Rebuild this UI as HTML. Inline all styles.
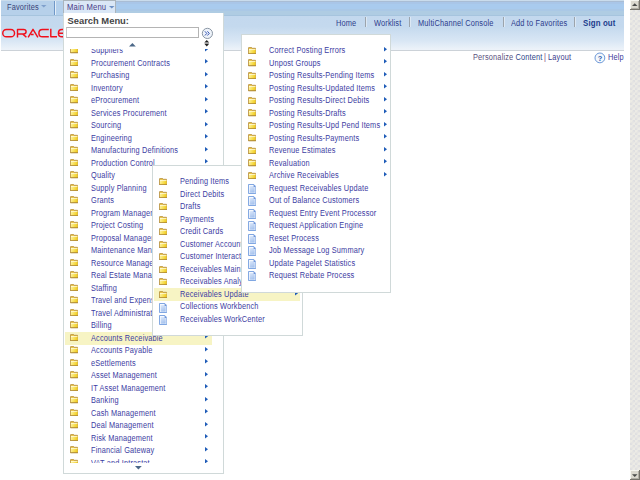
<!DOCTYPE html><html><head><meta charset="utf-8"><style>
*{margin:0;padding:0;box-sizing:border-box}
html,body{width:640px;height:480px;overflow:hidden;background:#fff;font-family:"Liberation Sans",sans-serif}
.abs{position:absolute}
.it{position:absolute;font-size:8.4px;line-height:12.5px;height:12.5px;color:#3c3ca2;white-space:nowrap;letter-spacing:0.18px;transform:scaleX(0.88);transform-origin:0 0}
.ico{position:absolute;line-height:0}
.ico svg{display:block}
.hl{position:absolute;background:#f7f4c4}
.panel{position:absolute;background:#fff;border:1px solid #d0d9d9;overflow:hidden}
.clip{position:absolute;overflow:hidden}
.nav{position:absolute;font-size:8.5px;line-height:10px;color:#2c3c8c;white-space:nowrap;top:17.5px;letter-spacing:0.18px;transform:scaleX(0.87);transform-origin:0 0}
.sep{position:absolute;top:16.5px;width:2px;height:10.5px;background:#9ca4ac;border-right:1px solid #dce8f4}
</style></head><body>
<svg width="0" height="0" style="position:absolute"><defs><linearGradient id="fg" x1="0" x2="1" y1="0" y2="0.3"><stop offset="0" stop-color="#fff6a8"/><stop offset="1" stop-color="#f2d028"/></linearGradient><linearGradient id="dg" x1="0" x2="0.4" y1="0" y2="1"><stop offset="0" stop-color="#dce8fa"/><stop offset="1" stop-color="#a8c4ee"/></linearGradient></defs></svg>
<div class="abs" style="left:1px;top:0;width:623px;height:16px;background:linear-gradient(#cadcec 0,#cadcec 1px,#a9bdd5 1px,#a9bdd5 2px,#a9c6e8 2px,#a9c6e8 4px,#a9cbee 4px,#a9cbee 9px,#aac8e6 9px,#aac8e6 11px,#afcce3 11px,#afcce3 15px,#a6c4de 15px)"></div>
<div class="abs" style="left:1px;top:1px;width:54px;height:14px;background:#b6d0ea;border-right:1px solid #7098c8"></div><div class="abs" style="left:56px;top:1px;width:7px;height:14px;background:#b4d0ec"></div>
<div class="abs" style="left:55px;top:1px;width:1px;height:14px;background:#e4eef8"></div>
<div class="nav" style="left:6.5px;top:1.5px;font-size:8.5px;color:#3a4478">Favorites</div>
<svg class="abs" style="left:41px;top:4.8px" width="6" height="3"><path d="M0 0 H5.5 L2.75 2.6 Z" fill="#7fa0cc"/></svg>
<div class="abs" style="left:1px;top:16px;width:623px;height:35px;background:linear-gradient(#c3d8ee 0,#c4d9ee 30%,#d8e6f4 70%,#ecf2f9 95%,#ecf2f9 100%)"></div>
<div class="abs" style="left:1px;top:50px;width:623px;height:1px;background:#ccd2d8"></div>
<svg class="abs" style="left:0;top:26px" width="63" height="14" viewBox="0 0 63 14">
<g fill="none" stroke="#f0101c" stroke-width="1.45" stroke-linejoin="round">
<rect x="2.75" y="3.5" width="11.8" height="7.3" rx="3.65" ry="3.65"/>
<path d="M17.5 11.5 V3.5 H23.5 Q26.1 3.5 26.1 5.7 Q26.1 7.9 23.5 7.9 H17.5 M22.6 7.9 L26.4 11.3"/>
<path d="M28.1 11.3 L33 3.3 L37.9 11.3 M30.9 8.4 H33.6"/>
<path d="M48.8 3.5 H42.5 Q38.9 3.5 38.9 7.15 Q38.9 10.8 42.5 10.8 H48.8"/>
<path d="M50.8 2.8 V10.8 H57"/>
<path d="M64 3.5 H62 Q58.4 3.5 58.4 7.15 Q58.4 10.8 62 10.8 H64 M59 7.15 H64"/>
</g></svg>
<div class="nav" style="left:335.8px">Home</div>
<div class="sep" style="left:365px"></div>
<div class="nav" style="left:374px">Worklist</div>
<div class="sep" style="left:409px"></div>
<div class="nav" style="left:418px">MultiChannel Console</div>
<div class="sep" style="left:502.5px"></div>
<div class="nav" style="left:511px">Add to Favorites</div>
<div class="sep" style="left:573.5px"></div>
<div class="nav" style="left:582.5px;font-weight:bold;font-size:9px;color:#1c3c8c">Sign out</div>
<div class="nav" style="left:472.5px;top:52px;color:#5a507c">Personalize <span style="color:#2c4488">Content</span></div>
<div class="nav" style="left:543.6px;top:52px;color:#7a3a7a">|</div>
<div class="nav" style="left:547.6px;top:52px;color:#3a3a8a">Layout</div>
<svg class="abs" style="left:594px;top:51.5px" width="12" height="12"><circle cx="5.9" cy="5.9" r="4.9" fill="#f4f8fc" stroke="#6c98d8" stroke-width="1"/><text x="5.9" y="8.7" font-size="7.4" font-weight="bold" font-family="Liberation Sans" fill="#2c5aac" text-anchor="middle">?</text></svg>
<div class="nav" style="left:607.5px;top:52px;color:#3a3a98">Help</div>
<div class="abs" style="left:63px;top:0;width:53px;height:14px;background:#dae7f6;border:1px solid #aab4bc;border-bottom:none"></div>
<div class="nav" style="left:67px;top:1.8px;font-size:8.8px;color:#483c88">Main Menu</div>
<svg class="abs" style="left:109px;top:6px" width="6" height="3"><path d="M0 0 H5.5 L2.75 2.6 Z" fill="#6c90c4"/></svg>
<div class="panel" style="left:63px;top:12.5px;width:161px;height:461px;border-top:none"></div>
<div class="abs" style="left:67.5px;top:15px;font-size:9.4px;line-height:11px;font-weight:bold;color:#454545">Search Menu:</div>
<div class="abs" style="left:65.5px;top:27px;width:133.5px;height:11px;border:1px solid #b4b4b4;border-left-color:#c8c8c8;background:#fff"></div>
<svg class="abs" style="left:201px;top:27px" width="13" height="13"><circle cx="6.4" cy="6.4" r="5.1" fill="#eef3fa" stroke="#8a96a4" stroke-width="1"/><path d="M3.9 4.3 L5.8 6.4 L3.9 8.5 M6.4 4.3 L8.3 6.4 L6.4 8.5" fill="none" stroke="#3050b0" stroke-width="0.95"/></svg>
<svg class="abs" style="left:204px;top:40px" width="6" height="7"><path d="M0.3 2.6 L2.75 0 L5.2 2.6 Z M0.3 3.8 L2.75 6.4 L5.2 3.8 Z" fill="#222"/><rect x="0.8" y="2.6" width="3.9" height="1.2" fill="#999"/></svg>
<svg class="abs" style="left:129px;top:42.5px" width="7" height="4"><path d="M0 3.4 L3.4 0 L6.8 3.4 Z" fill="#4c6888"/></svg>
<div class="clip" style="left:64px;top:49px;width:159px;height:414px">
<div class="abs" style="left:-64px;top:-49px;width:640px;height:480px">
<div class="ico" style="left:69.9px;top:46.2px"><svg class="ic" width="8.6" height="7.4" viewBox="0 0 9 8"><path d="M0.4 1.1 Q0.4 0.4 1.1 0.4 H3.6 L4.4 1.4 H7.7 Q8.4 1.4 8.4 2.1 V7.4 H0.4 Z" fill="#e8c450" stroke="#b08838" stroke-width="0.8"/><rect x="0.9" y="2.2" width="7" height="4.8" fill="url(#fg)"/><rect x="0.9" y="2.2" width="7" height="0.7" fill="#fffff2"/><rect x="0.4" y="7" width="8" height="0.6" fill="#9c7428"/></svg></div>
<div class="it" style="left:90.7px;top:43.8px">Suppliers</div>
<div class="ico" style="left:205px;top:46.8px"><svg class="ar" width="4" height="5" viewBox="0 0 4 5"><path d="M0 0 L3 2.25 L0 4.5 Z" fill="#1f5cb8"/></svg></div>
<div class="ico" style="left:69.9px;top:58.7px"><svg class="ic" width="8.6" height="7.4" viewBox="0 0 9 8"><path d="M0.4 1.1 Q0.4 0.4 1.1 0.4 H3.6 L4.4 1.4 H7.7 Q8.4 1.4 8.4 2.1 V7.4 H0.4 Z" fill="#e8c450" stroke="#b08838" stroke-width="0.8"/><rect x="0.9" y="2.2" width="7" height="4.8" fill="url(#fg)"/><rect x="0.9" y="2.2" width="7" height="0.7" fill="#fffff2"/><rect x="0.4" y="7" width="8" height="0.6" fill="#9c7428"/></svg></div>
<div class="it" style="left:90.7px;top:57.0px">Procurement Contracts</div>
<div class="ico" style="left:205px;top:59.3px"><svg class="ar" width="4" height="5" viewBox="0 0 4 5"><path d="M0 0 L3 2.25 L0 4.5 Z" fill="#1f5cb8"/></svg></div>
<div class="ico" style="left:69.9px;top:71.2px"><svg class="ic" width="8.6" height="7.4" viewBox="0 0 9 8"><path d="M0.4 1.1 Q0.4 0.4 1.1 0.4 H3.6 L4.4 1.4 H7.7 Q8.4 1.4 8.4 2.1 V7.4 H0.4 Z" fill="#e8c450" stroke="#b08838" stroke-width="0.8"/><rect x="0.9" y="2.2" width="7" height="4.8" fill="url(#fg)"/><rect x="0.9" y="2.2" width="7" height="0.7" fill="#fffff2"/><rect x="0.4" y="7" width="8" height="0.6" fill="#9c7428"/></svg></div>
<div class="it" style="left:90.7px;top:68.8px">Purchasing</div>
<div class="ico" style="left:205px;top:71.8px"><svg class="ar" width="4" height="5" viewBox="0 0 4 5"><path d="M0 0 L3 2.25 L0 4.5 Z" fill="#1f5cb8"/></svg></div>
<div class="ico" style="left:69.9px;top:83.7px"><svg class="ic" width="8.6" height="7.4" viewBox="0 0 9 8"><path d="M0.4 1.1 Q0.4 0.4 1.1 0.4 H3.6 L4.4 1.4 H7.7 Q8.4 1.4 8.4 2.1 V7.4 H0.4 Z" fill="#e8c450" stroke="#b08838" stroke-width="0.8"/><rect x="0.9" y="2.2" width="7" height="4.8" fill="url(#fg)"/><rect x="0.9" y="2.2" width="7" height="0.7" fill="#fffff2"/><rect x="0.4" y="7" width="8" height="0.6" fill="#9c7428"/></svg></div>
<div class="it" style="left:90.7px;top:82.0px">Inventory</div>
<div class="ico" style="left:205px;top:84.3px"><svg class="ar" width="4" height="5" viewBox="0 0 4 5"><path d="M0 0 L3 2.25 L0 4.5 Z" fill="#1f5cb8"/></svg></div>
<div class="ico" style="left:69.9px;top:96.2px"><svg class="ic" width="8.6" height="7.4" viewBox="0 0 9 8"><path d="M0.4 1.1 Q0.4 0.4 1.1 0.4 H3.6 L4.4 1.4 H7.7 Q8.4 1.4 8.4 2.1 V7.4 H0.4 Z" fill="#e8c450" stroke="#b08838" stroke-width="0.8"/><rect x="0.9" y="2.2" width="7" height="4.8" fill="url(#fg)"/><rect x="0.9" y="2.2" width="7" height="0.7" fill="#fffff2"/><rect x="0.4" y="7" width="8" height="0.6" fill="#9c7428"/></svg></div>
<div class="it" style="left:90.7px;top:93.8px">eProcurement</div>
<div class="ico" style="left:205px;top:96.8px"><svg class="ar" width="4" height="5" viewBox="0 0 4 5"><path d="M0 0 L3 2.25 L0 4.5 Z" fill="#1f5cb8"/></svg></div>
<div class="ico" style="left:69.9px;top:108.7px"><svg class="ic" width="8.6" height="7.4" viewBox="0 0 9 8"><path d="M0.4 1.1 Q0.4 0.4 1.1 0.4 H3.6 L4.4 1.4 H7.7 Q8.4 1.4 8.4 2.1 V7.4 H0.4 Z" fill="#e8c450" stroke="#b08838" stroke-width="0.8"/><rect x="0.9" y="2.2" width="7" height="4.8" fill="url(#fg)"/><rect x="0.9" y="2.2" width="7" height="0.7" fill="#fffff2"/><rect x="0.4" y="7" width="8" height="0.6" fill="#9c7428"/></svg></div>
<div class="it" style="left:90.7px;top:107.0px">Services Procurement</div>
<div class="ico" style="left:205px;top:109.3px"><svg class="ar" width="4" height="5" viewBox="0 0 4 5"><path d="M0 0 L3 2.25 L0 4.5 Z" fill="#1f5cb8"/></svg></div>
<div class="ico" style="left:69.9px;top:121.2px"><svg class="ic" width="8.6" height="7.4" viewBox="0 0 9 8"><path d="M0.4 1.1 Q0.4 0.4 1.1 0.4 H3.6 L4.4 1.4 H7.7 Q8.4 1.4 8.4 2.1 V7.4 H0.4 Z" fill="#e8c450" stroke="#b08838" stroke-width="0.8"/><rect x="0.9" y="2.2" width="7" height="4.8" fill="url(#fg)"/><rect x="0.9" y="2.2" width="7" height="0.7" fill="#fffff2"/><rect x="0.4" y="7" width="8" height="0.6" fill="#9c7428"/></svg></div>
<div class="it" style="left:90.7px;top:118.8px">Sourcing</div>
<div class="ico" style="left:205px;top:121.8px"><svg class="ar" width="4" height="5" viewBox="0 0 4 5"><path d="M0 0 L3 2.25 L0 4.5 Z" fill="#1f5cb8"/></svg></div>
<div class="ico" style="left:69.9px;top:133.7px"><svg class="ic" width="8.6" height="7.4" viewBox="0 0 9 8"><path d="M0.4 1.1 Q0.4 0.4 1.1 0.4 H3.6 L4.4 1.4 H7.7 Q8.4 1.4 8.4 2.1 V7.4 H0.4 Z" fill="#e8c450" stroke="#b08838" stroke-width="0.8"/><rect x="0.9" y="2.2" width="7" height="4.8" fill="url(#fg)"/><rect x="0.9" y="2.2" width="7" height="0.7" fill="#fffff2"/><rect x="0.4" y="7" width="8" height="0.6" fill="#9c7428"/></svg></div>
<div class="it" style="left:90.7px;top:132.0px">Engineering</div>
<div class="ico" style="left:205px;top:134.3px"><svg class="ar" width="4" height="5" viewBox="0 0 4 5"><path d="M0 0 L3 2.25 L0 4.5 Z" fill="#1f5cb8"/></svg></div>
<div class="ico" style="left:69.9px;top:146.2px"><svg class="ic" width="8.6" height="7.4" viewBox="0 0 9 8"><path d="M0.4 1.1 Q0.4 0.4 1.1 0.4 H3.6 L4.4 1.4 H7.7 Q8.4 1.4 8.4 2.1 V7.4 H0.4 Z" fill="#e8c450" stroke="#b08838" stroke-width="0.8"/><rect x="0.9" y="2.2" width="7" height="4.8" fill="url(#fg)"/><rect x="0.9" y="2.2" width="7" height="0.7" fill="#fffff2"/><rect x="0.4" y="7" width="8" height="0.6" fill="#9c7428"/></svg></div>
<div class="it" style="left:90.7px;top:143.8px">Manufacturing Definitions</div>
<div class="ico" style="left:205px;top:146.8px"><svg class="ar" width="4" height="5" viewBox="0 0 4 5"><path d="M0 0 L3 2.25 L0 4.5 Z" fill="#1f5cb8"/></svg></div>
<div class="ico" style="left:69.9px;top:158.7px"><svg class="ic" width="8.6" height="7.4" viewBox="0 0 9 8"><path d="M0.4 1.1 Q0.4 0.4 1.1 0.4 H3.6 L4.4 1.4 H7.7 Q8.4 1.4 8.4 2.1 V7.4 H0.4 Z" fill="#e8c450" stroke="#b08838" stroke-width="0.8"/><rect x="0.9" y="2.2" width="7" height="4.8" fill="url(#fg)"/><rect x="0.9" y="2.2" width="7" height="0.7" fill="#fffff2"/><rect x="0.4" y="7" width="8" height="0.6" fill="#9c7428"/></svg></div>
<div class="it" style="left:90.7px;top:157.0px">Production Control</div>
<div class="ico" style="left:205px;top:159.3px"><svg class="ar" width="4" height="5" viewBox="0 0 4 5"><path d="M0 0 L3 2.25 L0 4.5 Z" fill="#1f5cb8"/></svg></div>
<div class="ico" style="left:69.9px;top:171.2px"><svg class="ic" width="8.6" height="7.4" viewBox="0 0 9 8"><path d="M0.4 1.1 Q0.4 0.4 1.1 0.4 H3.6 L4.4 1.4 H7.7 Q8.4 1.4 8.4 2.1 V7.4 H0.4 Z" fill="#e8c450" stroke="#b08838" stroke-width="0.8"/><rect x="0.9" y="2.2" width="7" height="4.8" fill="url(#fg)"/><rect x="0.9" y="2.2" width="7" height="0.7" fill="#fffff2"/><rect x="0.4" y="7" width="8" height="0.6" fill="#9c7428"/></svg></div>
<div class="it" style="left:90.7px;top:168.8px">Quality</div>
<div class="ico" style="left:205px;top:171.8px"><svg class="ar" width="4" height="5" viewBox="0 0 4 5"><path d="M0 0 L3 2.25 L0 4.5 Z" fill="#1f5cb8"/></svg></div>
<div class="ico" style="left:69.9px;top:183.7px"><svg class="ic" width="8.6" height="7.4" viewBox="0 0 9 8"><path d="M0.4 1.1 Q0.4 0.4 1.1 0.4 H3.6 L4.4 1.4 H7.7 Q8.4 1.4 8.4 2.1 V7.4 H0.4 Z" fill="#e8c450" stroke="#b08838" stroke-width="0.8"/><rect x="0.9" y="2.2" width="7" height="4.8" fill="url(#fg)"/><rect x="0.9" y="2.2" width="7" height="0.7" fill="#fffff2"/><rect x="0.4" y="7" width="8" height="0.6" fill="#9c7428"/></svg></div>
<div class="it" style="left:90.7px;top:182.0px">Supply Planning</div>
<div class="ico" style="left:205px;top:184.3px"><svg class="ar" width="4" height="5" viewBox="0 0 4 5"><path d="M0 0 L3 2.25 L0 4.5 Z" fill="#1f5cb8"/></svg></div>
<div class="ico" style="left:69.9px;top:196.2px"><svg class="ic" width="8.6" height="7.4" viewBox="0 0 9 8"><path d="M0.4 1.1 Q0.4 0.4 1.1 0.4 H3.6 L4.4 1.4 H7.7 Q8.4 1.4 8.4 2.1 V7.4 H0.4 Z" fill="#e8c450" stroke="#b08838" stroke-width="0.8"/><rect x="0.9" y="2.2" width="7" height="4.8" fill="url(#fg)"/><rect x="0.9" y="2.2" width="7" height="0.7" fill="#fffff2"/><rect x="0.4" y="7" width="8" height="0.6" fill="#9c7428"/></svg></div>
<div class="it" style="left:90.7px;top:193.8px">Grants</div>
<div class="ico" style="left:205px;top:196.8px"><svg class="ar" width="4" height="5" viewBox="0 0 4 5"><path d="M0 0 L3 2.25 L0 4.5 Z" fill="#1f5cb8"/></svg></div>
<div class="ico" style="left:69.9px;top:208.7px"><svg class="ic" width="8.6" height="7.4" viewBox="0 0 9 8"><path d="M0.4 1.1 Q0.4 0.4 1.1 0.4 H3.6 L4.4 1.4 H7.7 Q8.4 1.4 8.4 2.1 V7.4 H0.4 Z" fill="#e8c450" stroke="#b08838" stroke-width="0.8"/><rect x="0.9" y="2.2" width="7" height="4.8" fill="url(#fg)"/><rect x="0.9" y="2.2" width="7" height="0.7" fill="#fffff2"/><rect x="0.4" y="7" width="8" height="0.6" fill="#9c7428"/></svg></div>
<div class="it" style="left:90.7px;top:207.0px">Program Management</div>
<div class="ico" style="left:205px;top:209.3px"><svg class="ar" width="4" height="5" viewBox="0 0 4 5"><path d="M0 0 L3 2.25 L0 4.5 Z" fill="#1f5cb8"/></svg></div>
<div class="ico" style="left:69.9px;top:221.2px"><svg class="ic" width="8.6" height="7.4" viewBox="0 0 9 8"><path d="M0.4 1.1 Q0.4 0.4 1.1 0.4 H3.6 L4.4 1.4 H7.7 Q8.4 1.4 8.4 2.1 V7.4 H0.4 Z" fill="#e8c450" stroke="#b08838" stroke-width="0.8"/><rect x="0.9" y="2.2" width="7" height="4.8" fill="url(#fg)"/><rect x="0.9" y="2.2" width="7" height="0.7" fill="#fffff2"/><rect x="0.4" y="7" width="8" height="0.6" fill="#9c7428"/></svg></div>
<div class="it" style="left:90.7px;top:218.8px">Project Costing</div>
<div class="ico" style="left:205px;top:221.8px"><svg class="ar" width="4" height="5" viewBox="0 0 4 5"><path d="M0 0 L3 2.25 L0 4.5 Z" fill="#1f5cb8"/></svg></div>
<div class="ico" style="left:69.9px;top:233.7px"><svg class="ic" width="8.6" height="7.4" viewBox="0 0 9 8"><path d="M0.4 1.1 Q0.4 0.4 1.1 0.4 H3.6 L4.4 1.4 H7.7 Q8.4 1.4 8.4 2.1 V7.4 H0.4 Z" fill="#e8c450" stroke="#b08838" stroke-width="0.8"/><rect x="0.9" y="2.2" width="7" height="4.8" fill="url(#fg)"/><rect x="0.9" y="2.2" width="7" height="0.7" fill="#fffff2"/><rect x="0.4" y="7" width="8" height="0.6" fill="#9c7428"/></svg></div>
<div class="it" style="left:90.7px;top:232.0px">Proposal Management</div>
<div class="ico" style="left:205px;top:234.3px"><svg class="ar" width="4" height="5" viewBox="0 0 4 5"><path d="M0 0 L3 2.25 L0 4.5 Z" fill="#1f5cb8"/></svg></div>
<div class="ico" style="left:69.9px;top:246.2px"><svg class="ic" width="8.6" height="7.4" viewBox="0 0 9 8"><path d="M0.4 1.1 Q0.4 0.4 1.1 0.4 H3.6 L4.4 1.4 H7.7 Q8.4 1.4 8.4 2.1 V7.4 H0.4 Z" fill="#e8c450" stroke="#b08838" stroke-width="0.8"/><rect x="0.9" y="2.2" width="7" height="4.8" fill="url(#fg)"/><rect x="0.9" y="2.2" width="7" height="0.7" fill="#fffff2"/><rect x="0.4" y="7" width="8" height="0.6" fill="#9c7428"/></svg></div>
<div class="it" style="left:90.7px;top:243.8px">Maintenance Management</div>
<div class="ico" style="left:205px;top:246.8px"><svg class="ar" width="4" height="5" viewBox="0 0 4 5"><path d="M0 0 L3 2.25 L0 4.5 Z" fill="#1f5cb8"/></svg></div>
<div class="ico" style="left:69.9px;top:258.7px"><svg class="ic" width="8.6" height="7.4" viewBox="0 0 9 8"><path d="M0.4 1.1 Q0.4 0.4 1.1 0.4 H3.6 L4.4 1.4 H7.7 Q8.4 1.4 8.4 2.1 V7.4 H0.4 Z" fill="#e8c450" stroke="#b08838" stroke-width="0.8"/><rect x="0.9" y="2.2" width="7" height="4.8" fill="url(#fg)"/><rect x="0.9" y="2.2" width="7" height="0.7" fill="#fffff2"/><rect x="0.4" y="7" width="8" height="0.6" fill="#9c7428"/></svg></div>
<div class="it" style="left:90.7px;top:257.0px">Resource Management</div>
<div class="ico" style="left:205px;top:259.3px"><svg class="ar" width="4" height="5" viewBox="0 0 4 5"><path d="M0 0 L3 2.25 L0 4.5 Z" fill="#1f5cb8"/></svg></div>
<div class="ico" style="left:69.9px;top:271.2px"><svg class="ic" width="8.6" height="7.4" viewBox="0 0 9 8"><path d="M0.4 1.1 Q0.4 0.4 1.1 0.4 H3.6 L4.4 1.4 H7.7 Q8.4 1.4 8.4 2.1 V7.4 H0.4 Z" fill="#e8c450" stroke="#b08838" stroke-width="0.8"/><rect x="0.9" y="2.2" width="7" height="4.8" fill="url(#fg)"/><rect x="0.9" y="2.2" width="7" height="0.7" fill="#fffff2"/><rect x="0.4" y="7" width="8" height="0.6" fill="#9c7428"/></svg></div>
<div class="it" style="left:90.7px;top:268.8px">Real Estate Management</div>
<div class="ico" style="left:205px;top:271.8px"><svg class="ar" width="4" height="5" viewBox="0 0 4 5"><path d="M0 0 L3 2.25 L0 4.5 Z" fill="#1f5cb8"/></svg></div>
<div class="ico" style="left:69.9px;top:283.7px"><svg class="ic" width="8.6" height="7.4" viewBox="0 0 9 8"><path d="M0.4 1.1 Q0.4 0.4 1.1 0.4 H3.6 L4.4 1.4 H7.7 Q8.4 1.4 8.4 2.1 V7.4 H0.4 Z" fill="#e8c450" stroke="#b08838" stroke-width="0.8"/><rect x="0.9" y="2.2" width="7" height="4.8" fill="url(#fg)"/><rect x="0.9" y="2.2" width="7" height="0.7" fill="#fffff2"/><rect x="0.4" y="7" width="8" height="0.6" fill="#9c7428"/></svg></div>
<div class="it" style="left:90.7px;top:282.0px">Staffing</div>
<div class="ico" style="left:205px;top:284.3px"><svg class="ar" width="4" height="5" viewBox="0 0 4 5"><path d="M0 0 L3 2.25 L0 4.5 Z" fill="#1f5cb8"/></svg></div>
<div class="ico" style="left:69.9px;top:296.2px"><svg class="ic" width="8.6" height="7.4" viewBox="0 0 9 8"><path d="M0.4 1.1 Q0.4 0.4 1.1 0.4 H3.6 L4.4 1.4 H7.7 Q8.4 1.4 8.4 2.1 V7.4 H0.4 Z" fill="#e8c450" stroke="#b08838" stroke-width="0.8"/><rect x="0.9" y="2.2" width="7" height="4.8" fill="url(#fg)"/><rect x="0.9" y="2.2" width="7" height="0.7" fill="#fffff2"/><rect x="0.4" y="7" width="8" height="0.6" fill="#9c7428"/></svg></div>
<div class="it" style="left:90.7px;top:293.8px">Travel and Expenses</div>
<div class="ico" style="left:205px;top:296.8px"><svg class="ar" width="4" height="5" viewBox="0 0 4 5"><path d="M0 0 L3 2.25 L0 4.5 Z" fill="#1f5cb8"/></svg></div>
<div class="ico" style="left:69.9px;top:308.7px"><svg class="ic" width="8.6" height="7.4" viewBox="0 0 9 8"><path d="M0.4 1.1 Q0.4 0.4 1.1 0.4 H3.6 L4.4 1.4 H7.7 Q8.4 1.4 8.4 2.1 V7.4 H0.4 Z" fill="#e8c450" stroke="#b08838" stroke-width="0.8"/><rect x="0.9" y="2.2" width="7" height="4.8" fill="url(#fg)"/><rect x="0.9" y="2.2" width="7" height="0.7" fill="#fffff2"/><rect x="0.4" y="7" width="8" height="0.6" fill="#9c7428"/></svg></div>
<div class="it" style="left:90.7px;top:307.0px">Travel Administration</div>
<div class="ico" style="left:205px;top:309.3px"><svg class="ar" width="4" height="5" viewBox="0 0 4 5"><path d="M0 0 L3 2.25 L0 4.5 Z" fill="#1f5cb8"/></svg></div>
<div class="ico" style="left:69.9px;top:321.2px"><svg class="ic" width="8.6" height="7.4" viewBox="0 0 9 8"><path d="M0.4 1.1 Q0.4 0.4 1.1 0.4 H3.6 L4.4 1.4 H7.7 Q8.4 1.4 8.4 2.1 V7.4 H0.4 Z" fill="#e8c450" stroke="#b08838" stroke-width="0.8"/><rect x="0.9" y="2.2" width="7" height="4.8" fill="url(#fg)"/><rect x="0.9" y="2.2" width="7" height="0.7" fill="#fffff2"/><rect x="0.4" y="7" width="8" height="0.6" fill="#9c7428"/></svg></div>
<div class="it" style="left:90.7px;top:318.8px">Billing</div>
<div class="ico" style="left:205px;top:321.8px"><svg class="ar" width="4" height="5" viewBox="0 0 4 5"><path d="M0 0 L3 2.25 L0 4.5 Z" fill="#1f5cb8"/></svg></div>
<div class="hl" style="left:65px;top:332.0px;width:147px;height:12.5px"></div>
<div class="ico" style="left:69.9px;top:333.7px"><svg class="ic" width="8.6" height="7.4" viewBox="0 0 9 8"><path d="M0.4 1.1 Q0.4 0.4 1.1 0.4 H3.6 L4.4 1.4 H7.7 Q8.4 1.4 8.4 2.1 V7.4 H0.4 Z" fill="#e8c450" stroke="#b08838" stroke-width="0.8"/><rect x="0.9" y="2.2" width="7" height="4.8" fill="url(#fg)"/><rect x="0.9" y="2.2" width="7" height="0.7" fill="#fffff2"/><rect x="0.4" y="7" width="8" height="0.6" fill="#9c7428"/></svg></div>
<div class="it" style="left:90.7px;top:332.0px">Accounts Receivable</div>
<div class="ico" style="left:205px;top:334.3px"><svg class="ar" width="4" height="5" viewBox="0 0 4 5"><path d="M0 0 L3 2.25 L0 4.5 Z" fill="#1f5cb8"/></svg></div>
<div class="ico" style="left:69.9px;top:346.2px"><svg class="ic" width="8.6" height="7.4" viewBox="0 0 9 8"><path d="M0.4 1.1 Q0.4 0.4 1.1 0.4 H3.6 L4.4 1.4 H7.7 Q8.4 1.4 8.4 2.1 V7.4 H0.4 Z" fill="#e8c450" stroke="#b08838" stroke-width="0.8"/><rect x="0.9" y="2.2" width="7" height="4.8" fill="url(#fg)"/><rect x="0.9" y="2.2" width="7" height="0.7" fill="#fffff2"/><rect x="0.4" y="7" width="8" height="0.6" fill="#9c7428"/></svg></div>
<div class="it" style="left:90.7px;top:343.8px">Accounts Payable</div>
<div class="ico" style="left:205px;top:346.8px"><svg class="ar" width="4" height="5" viewBox="0 0 4 5"><path d="M0 0 L3 2.25 L0 4.5 Z" fill="#1f5cb8"/></svg></div>
<div class="ico" style="left:69.9px;top:358.7px"><svg class="ic" width="8.6" height="7.4" viewBox="0 0 9 8"><path d="M0.4 1.1 Q0.4 0.4 1.1 0.4 H3.6 L4.4 1.4 H7.7 Q8.4 1.4 8.4 2.1 V7.4 H0.4 Z" fill="#e8c450" stroke="#b08838" stroke-width="0.8"/><rect x="0.9" y="2.2" width="7" height="4.8" fill="url(#fg)"/><rect x="0.9" y="2.2" width="7" height="0.7" fill="#fffff2"/><rect x="0.4" y="7" width="8" height="0.6" fill="#9c7428"/></svg></div>
<div class="it" style="left:90.7px;top:357.0px">eSettlements</div>
<div class="ico" style="left:205px;top:359.3px"><svg class="ar" width="4" height="5" viewBox="0 0 4 5"><path d="M0 0 L3 2.25 L0 4.5 Z" fill="#1f5cb8"/></svg></div>
<div class="ico" style="left:69.9px;top:371.2px"><svg class="ic" width="8.6" height="7.4" viewBox="0 0 9 8"><path d="M0.4 1.1 Q0.4 0.4 1.1 0.4 H3.6 L4.4 1.4 H7.7 Q8.4 1.4 8.4 2.1 V7.4 H0.4 Z" fill="#e8c450" stroke="#b08838" stroke-width="0.8"/><rect x="0.9" y="2.2" width="7" height="4.8" fill="url(#fg)"/><rect x="0.9" y="2.2" width="7" height="0.7" fill="#fffff2"/><rect x="0.4" y="7" width="8" height="0.6" fill="#9c7428"/></svg></div>
<div class="it" style="left:90.7px;top:368.8px">Asset Management</div>
<div class="ico" style="left:205px;top:371.8px"><svg class="ar" width="4" height="5" viewBox="0 0 4 5"><path d="M0 0 L3 2.25 L0 4.5 Z" fill="#1f5cb8"/></svg></div>
<div class="ico" style="left:69.9px;top:383.7px"><svg class="ic" width="8.6" height="7.4" viewBox="0 0 9 8"><path d="M0.4 1.1 Q0.4 0.4 1.1 0.4 H3.6 L4.4 1.4 H7.7 Q8.4 1.4 8.4 2.1 V7.4 H0.4 Z" fill="#e8c450" stroke="#b08838" stroke-width="0.8"/><rect x="0.9" y="2.2" width="7" height="4.8" fill="url(#fg)"/><rect x="0.9" y="2.2" width="7" height="0.7" fill="#fffff2"/><rect x="0.4" y="7" width="8" height="0.6" fill="#9c7428"/></svg></div>
<div class="it" style="left:90.7px;top:382.0px">IT Asset Management</div>
<div class="ico" style="left:205px;top:384.3px"><svg class="ar" width="4" height="5" viewBox="0 0 4 5"><path d="M0 0 L3 2.25 L0 4.5 Z" fill="#1f5cb8"/></svg></div>
<div class="ico" style="left:69.9px;top:396.2px"><svg class="ic" width="8.6" height="7.4" viewBox="0 0 9 8"><path d="M0.4 1.1 Q0.4 0.4 1.1 0.4 H3.6 L4.4 1.4 H7.7 Q8.4 1.4 8.4 2.1 V7.4 H0.4 Z" fill="#e8c450" stroke="#b08838" stroke-width="0.8"/><rect x="0.9" y="2.2" width="7" height="4.8" fill="url(#fg)"/><rect x="0.9" y="2.2" width="7" height="0.7" fill="#fffff2"/><rect x="0.4" y="7" width="8" height="0.6" fill="#9c7428"/></svg></div>
<div class="it" style="left:90.7px;top:393.8px">Banking</div>
<div class="ico" style="left:205px;top:396.8px"><svg class="ar" width="4" height="5" viewBox="0 0 4 5"><path d="M0 0 L3 2.25 L0 4.5 Z" fill="#1f5cb8"/></svg></div>
<div class="ico" style="left:69.9px;top:408.7px"><svg class="ic" width="8.6" height="7.4" viewBox="0 0 9 8"><path d="M0.4 1.1 Q0.4 0.4 1.1 0.4 H3.6 L4.4 1.4 H7.7 Q8.4 1.4 8.4 2.1 V7.4 H0.4 Z" fill="#e8c450" stroke="#b08838" stroke-width="0.8"/><rect x="0.9" y="2.2" width="7" height="4.8" fill="url(#fg)"/><rect x="0.9" y="2.2" width="7" height="0.7" fill="#fffff2"/><rect x="0.4" y="7" width="8" height="0.6" fill="#9c7428"/></svg></div>
<div class="it" style="left:90.7px;top:407.0px">Cash Management</div>
<div class="ico" style="left:205px;top:409.3px"><svg class="ar" width="4" height="5" viewBox="0 0 4 5"><path d="M0 0 L3 2.25 L0 4.5 Z" fill="#1f5cb8"/></svg></div>
<div class="ico" style="left:69.9px;top:421.2px"><svg class="ic" width="8.6" height="7.4" viewBox="0 0 9 8"><path d="M0.4 1.1 Q0.4 0.4 1.1 0.4 H3.6 L4.4 1.4 H7.7 Q8.4 1.4 8.4 2.1 V7.4 H0.4 Z" fill="#e8c450" stroke="#b08838" stroke-width="0.8"/><rect x="0.9" y="2.2" width="7" height="4.8" fill="url(#fg)"/><rect x="0.9" y="2.2" width="7" height="0.7" fill="#fffff2"/><rect x="0.4" y="7" width="8" height="0.6" fill="#9c7428"/></svg></div>
<div class="it" style="left:90.7px;top:418.8px">Deal Management</div>
<div class="ico" style="left:205px;top:421.8px"><svg class="ar" width="4" height="5" viewBox="0 0 4 5"><path d="M0 0 L3 2.25 L0 4.5 Z" fill="#1f5cb8"/></svg></div>
<div class="ico" style="left:69.9px;top:433.7px"><svg class="ic" width="8.6" height="7.4" viewBox="0 0 9 8"><path d="M0.4 1.1 Q0.4 0.4 1.1 0.4 H3.6 L4.4 1.4 H7.7 Q8.4 1.4 8.4 2.1 V7.4 H0.4 Z" fill="#e8c450" stroke="#b08838" stroke-width="0.8"/><rect x="0.9" y="2.2" width="7" height="4.8" fill="url(#fg)"/><rect x="0.9" y="2.2" width="7" height="0.7" fill="#fffff2"/><rect x="0.4" y="7" width="8" height="0.6" fill="#9c7428"/></svg></div>
<div class="it" style="left:90.7px;top:432.0px">Risk Management</div>
<div class="ico" style="left:205px;top:434.3px"><svg class="ar" width="4" height="5" viewBox="0 0 4 5"><path d="M0 0 L3 2.25 L0 4.5 Z" fill="#1f5cb8"/></svg></div>
<div class="ico" style="left:69.9px;top:446.2px"><svg class="ic" width="8.6" height="7.4" viewBox="0 0 9 8"><path d="M0.4 1.1 Q0.4 0.4 1.1 0.4 H3.6 L4.4 1.4 H7.7 Q8.4 1.4 8.4 2.1 V7.4 H0.4 Z" fill="#e8c450" stroke="#b08838" stroke-width="0.8"/><rect x="0.9" y="2.2" width="7" height="4.8" fill="url(#fg)"/><rect x="0.9" y="2.2" width="7" height="0.7" fill="#fffff2"/><rect x="0.4" y="7" width="8" height="0.6" fill="#9c7428"/></svg></div>
<div class="it" style="left:90.7px;top:443.8px">Financial Gateway</div>
<div class="ico" style="left:205px;top:446.8px"><svg class="ar" width="4" height="5" viewBox="0 0 4 5"><path d="M0 0 L3 2.25 L0 4.5 Z" fill="#1f5cb8"/></svg></div>
<div class="ico" style="left:69.9px;top:458.7px"><svg class="ic" width="8.6" height="7.4" viewBox="0 0 9 8"><path d="M0.4 1.1 Q0.4 0.4 1.1 0.4 H3.6 L4.4 1.4 H7.7 Q8.4 1.4 8.4 2.1 V7.4 H0.4 Z" fill="#e8c450" stroke="#b08838" stroke-width="0.8"/><rect x="0.9" y="2.2" width="7" height="4.8" fill="url(#fg)"/><rect x="0.9" y="2.2" width="7" height="0.7" fill="#fffff2"/><rect x="0.4" y="7" width="8" height="0.6" fill="#9c7428"/></svg></div>
<div class="it" style="left:90.7px;top:457.0px">VAT and Intrastat</div>
<div class="ico" style="left:205px;top:459.3px"><svg class="ar" width="4" height="5" viewBox="0 0 4 5"><path d="M0 0 L3 2.25 L0 4.5 Z" fill="#1f5cb8"/></svg></div>
</div></div>
<svg class="abs" style="left:135px;top:466px" width="7" height="4"><path d="M0 0 H6.8 L3.4 3.4 Z" fill="#4c6888"/></svg>
<div class="panel" style="left:152px;top:165px;width:151px;height:171px"></div>
<div class="clip" style="left:153px;top:166px;width:149px;height:169px">
<div class="abs" style="left:-153px;top:-166px;width:640px;height:480px">
<div class="ico" style="left:158.9px;top:178.1px"><svg class="ic" width="8.6" height="7.4" viewBox="0 0 9 8"><path d="M0.4 1.1 Q0.4 0.4 1.1 0.4 H3.6 L4.4 1.4 H7.7 Q8.4 1.4 8.4 2.1 V7.4 H0.4 Z" fill="#e8c450" stroke="#b08838" stroke-width="0.8"/><rect x="0.9" y="2.2" width="7" height="4.8" fill="url(#fg)"/><rect x="0.9" y="2.2" width="7" height="0.7" fill="#fffff2"/><rect x="0.4" y="7" width="8" height="0.6" fill="#9c7428"/></svg></div>
<div class="it" style="left:180.3px;top:174.8px">Pending Items</div>
<div class="ico" style="left:295px;top:178.7px"><svg class="ar" width="4" height="5" viewBox="0 0 4 5"><path d="M0 0 L3 2.25 L0 4.5 Z" fill="#1f5cb8"/></svg></div>
<div class="ico" style="left:158.9px;top:190.6px"><svg class="ic" width="8.6" height="7.4" viewBox="0 0 9 8"><path d="M0.4 1.1 Q0.4 0.4 1.1 0.4 H3.6 L4.4 1.4 H7.7 Q8.4 1.4 8.4 2.1 V7.4 H0.4 Z" fill="#e8c450" stroke="#b08838" stroke-width="0.8"/><rect x="0.9" y="2.2" width="7" height="4.8" fill="url(#fg)"/><rect x="0.9" y="2.2" width="7" height="0.7" fill="#fffff2"/><rect x="0.4" y="7" width="8" height="0.6" fill="#9c7428"/></svg></div>
<div class="it" style="left:180.3px;top:187.9px">Direct Debits</div>
<div class="ico" style="left:295px;top:191.2px"><svg class="ar" width="4" height="5" viewBox="0 0 4 5"><path d="M0 0 L3 2.25 L0 4.5 Z" fill="#1f5cb8"/></svg></div>
<div class="ico" style="left:158.9px;top:203.1px"><svg class="ic" width="8.6" height="7.4" viewBox="0 0 9 8"><path d="M0.4 1.1 Q0.4 0.4 1.1 0.4 H3.6 L4.4 1.4 H7.7 Q8.4 1.4 8.4 2.1 V7.4 H0.4 Z" fill="#e8c450" stroke="#b08838" stroke-width="0.8"/><rect x="0.9" y="2.2" width="7" height="4.8" fill="url(#fg)"/><rect x="0.9" y="2.2" width="7" height="0.7" fill="#fffff2"/><rect x="0.4" y="7" width="8" height="0.6" fill="#9c7428"/></svg></div>
<div class="it" style="left:180.3px;top:199.8px">Drafts</div>
<div class="ico" style="left:295px;top:203.7px"><svg class="ar" width="4" height="5" viewBox="0 0 4 5"><path d="M0 0 L3 2.25 L0 4.5 Z" fill="#1f5cb8"/></svg></div>
<div class="ico" style="left:158.9px;top:215.6px"><svg class="ic" width="8.6" height="7.4" viewBox="0 0 9 8"><path d="M0.4 1.1 Q0.4 0.4 1.1 0.4 H3.6 L4.4 1.4 H7.7 Q8.4 1.4 8.4 2.1 V7.4 H0.4 Z" fill="#e8c450" stroke="#b08838" stroke-width="0.8"/><rect x="0.9" y="2.2" width="7" height="4.8" fill="url(#fg)"/><rect x="0.9" y="2.2" width="7" height="0.7" fill="#fffff2"/><rect x="0.4" y="7" width="8" height="0.6" fill="#9c7428"/></svg></div>
<div class="it" style="left:180.3px;top:212.9px">Payments</div>
<div class="ico" style="left:295px;top:216.2px"><svg class="ar" width="4" height="5" viewBox="0 0 4 5"><path d="M0 0 L3 2.25 L0 4.5 Z" fill="#1f5cb8"/></svg></div>
<div class="ico" style="left:158.9px;top:228.1px"><svg class="ic" width="8.6" height="7.4" viewBox="0 0 9 8"><path d="M0.4 1.1 Q0.4 0.4 1.1 0.4 H3.6 L4.4 1.4 H7.7 Q8.4 1.4 8.4 2.1 V7.4 H0.4 Z" fill="#e8c450" stroke="#b08838" stroke-width="0.8"/><rect x="0.9" y="2.2" width="7" height="4.8" fill="url(#fg)"/><rect x="0.9" y="2.2" width="7" height="0.7" fill="#fffff2"/><rect x="0.4" y="7" width="8" height="0.6" fill="#9c7428"/></svg></div>
<div class="it" style="left:180.3px;top:224.8px">Credit Cards</div>
<div class="ico" style="left:295px;top:228.7px"><svg class="ar" width="4" height="5" viewBox="0 0 4 5"><path d="M0 0 L3 2.25 L0 4.5 Z" fill="#1f5cb8"/></svg></div>
<div class="ico" style="left:158.9px;top:240.6px"><svg class="ic" width="8.6" height="7.4" viewBox="0 0 9 8"><path d="M0.4 1.1 Q0.4 0.4 1.1 0.4 H3.6 L4.4 1.4 H7.7 Q8.4 1.4 8.4 2.1 V7.4 H0.4 Z" fill="#e8c450" stroke="#b08838" stroke-width="0.8"/><rect x="0.9" y="2.2" width="7" height="4.8" fill="url(#fg)"/><rect x="0.9" y="2.2" width="7" height="0.7" fill="#fffff2"/><rect x="0.4" y="7" width="8" height="0.6" fill="#9c7428"/></svg></div>
<div class="it" style="left:180.3px;top:237.9px">Customer Accounts</div>
<div class="ico" style="left:295px;top:241.2px"><svg class="ar" width="4" height="5" viewBox="0 0 4 5"><path d="M0 0 L3 2.25 L0 4.5 Z" fill="#1f5cb8"/></svg></div>
<div class="ico" style="left:158.9px;top:253.1px"><svg class="ic" width="8.6" height="7.4" viewBox="0 0 9 8"><path d="M0.4 1.1 Q0.4 0.4 1.1 0.4 H3.6 L4.4 1.4 H7.7 Q8.4 1.4 8.4 2.1 V7.4 H0.4 Z" fill="#e8c450" stroke="#b08838" stroke-width="0.8"/><rect x="0.9" y="2.2" width="7" height="4.8" fill="url(#fg)"/><rect x="0.9" y="2.2" width="7" height="0.7" fill="#fffff2"/><rect x="0.4" y="7" width="8" height="0.6" fill="#9c7428"/></svg></div>
<div class="it" style="left:180.3px;top:249.8px">Customer Interactions</div>
<div class="ico" style="left:295px;top:253.7px"><svg class="ar" width="4" height="5" viewBox="0 0 4 5"><path d="M0 0 L3 2.25 L0 4.5 Z" fill="#1f5cb8"/></svg></div>
<div class="ico" style="left:158.9px;top:265.59999999999997px"><svg class="ic" width="8.6" height="7.4" viewBox="0 0 9 8"><path d="M0.4 1.1 Q0.4 0.4 1.1 0.4 H3.6 L4.4 1.4 H7.7 Q8.4 1.4 8.4 2.1 V7.4 H0.4 Z" fill="#e8c450" stroke="#b08838" stroke-width="0.8"/><rect x="0.9" y="2.2" width="7" height="4.8" fill="url(#fg)"/><rect x="0.9" y="2.2" width="7" height="0.7" fill="#fffff2"/><rect x="0.4" y="7" width="8" height="0.6" fill="#9c7428"/></svg></div>
<div class="it" style="left:180.3px;top:262.90000000000003px">Receivables Maintenance</div>
<div class="ico" style="left:295px;top:266.2px"><svg class="ar" width="4" height="5" viewBox="0 0 4 5"><path d="M0 0 L3 2.25 L0 4.5 Z" fill="#1f5cb8"/></svg></div>
<div class="ico" style="left:158.9px;top:278.09999999999997px"><svg class="ic" width="8.6" height="7.4" viewBox="0 0 9 8"><path d="M0.4 1.1 Q0.4 0.4 1.1 0.4 H3.6 L4.4 1.4 H7.7 Q8.4 1.4 8.4 2.1 V7.4 H0.4 Z" fill="#e8c450" stroke="#b08838" stroke-width="0.8"/><rect x="0.9" y="2.2" width="7" height="4.8" fill="url(#fg)"/><rect x="0.9" y="2.2" width="7" height="0.7" fill="#fffff2"/><rect x="0.4" y="7" width="8" height="0.6" fill="#9c7428"/></svg></div>
<div class="it" style="left:180.3px;top:274.8px">Receivables Analysis</div>
<div class="ico" style="left:295px;top:278.7px"><svg class="ar" width="4" height="5" viewBox="0 0 4 5"><path d="M0 0 L3 2.25 L0 4.5 Z" fill="#1f5cb8"/></svg></div>
<div class="hl" style="left:154px;top:288.0px;width:146px;height:12.5px"></div>
<div class="ico" style="left:158.9px;top:290.59999999999997px"><svg class="ic" width="8.6" height="7.4" viewBox="0 0 9 8"><path d="M0.4 1.1 Q0.4 0.4 1.1 0.4 H3.6 L4.4 1.4 H7.7 Q8.4 1.4 8.4 2.1 V7.4 H0.4 Z" fill="#e8c450" stroke="#b08838" stroke-width="0.8"/><rect x="0.9" y="2.2" width="7" height="4.8" fill="url(#fg)"/><rect x="0.9" y="2.2" width="7" height="0.7" fill="#fffff2"/><rect x="0.4" y="7" width="8" height="0.6" fill="#9c7428"/></svg></div>
<div class="it" style="left:180.3px;top:287.90000000000003px">Receivables Update</div>
<div class="ico" style="left:295px;top:291.2px"><svg class="ar" width="4" height="5" viewBox="0 0 4 5"><path d="M0 0 L3 2.25 L0 4.5 Z" fill="#1f5cb8"/></svg></div>
<div class="ico" style="left:158.8px;top:302.5px"><svg class="ic" width="8.5" height="10" viewBox="0 0 9 10" preserveAspectRatio="none"><path d="M0.5 0.5 H6.2 L8.3 2.6 V9.5 H0.5 Z" fill="#f6f9fe" stroke="#6e9ade" stroke-width="0.9"/><rect x="1.8" y="2.1" width="5.3" height="6.6" fill="url(#dg)"/><path d="M6 0.7 L8.1 2.8 H6 Z" fill="#4a7ad0"/></svg></div>
<div class="it" style="left:180.3px;top:299.8px">Collections Workbench</div>
<div class="ico" style="left:158.8px;top:315.0px"><svg class="ic" width="8.5" height="10" viewBox="0 0 9 10" preserveAspectRatio="none"><path d="M0.5 0.5 H6.2 L8.3 2.6 V9.5 H0.5 Z" fill="#f6f9fe" stroke="#6e9ade" stroke-width="0.9"/><rect x="1.8" y="2.1" width="5.3" height="6.6" fill="url(#dg)"/><path d="M6 0.7 L8.1 2.8 H6 Z" fill="#4a7ad0"/></svg></div>
<div class="it" style="left:180.3px;top:312.90000000000003px">Receivables WorkCenter</div>
</div></div>
<div class="panel" style="left:241px;top:33.5px;width:150px;height:259.5px"></div>
<div class="clip" style="left:242px;top:35px;width:148px;height:257px">
<div class="abs" style="left:-242px;top:-35px;width:640px;height:480px">
<div class="ico" style="left:247.9px;top:46.800000000000004px"><svg class="ic" width="8.6" height="7.4" viewBox="0 0 9 8"><path d="M0.4 1.1 Q0.4 0.4 1.1 0.4 H3.6 L4.4 1.4 H7.7 Q8.4 1.4 8.4 2.1 V7.4 H0.4 Z" fill="#e8c450" stroke="#b08838" stroke-width="0.8"/><rect x="0.9" y="2.2" width="7" height="4.8" fill="url(#fg)"/><rect x="0.9" y="2.2" width="7" height="0.7" fill="#fffff2"/><rect x="0.4" y="7" width="8" height="0.6" fill="#9c7428"/></svg></div>
<div class="it" style="left:269px;top:43.9px">Correct Posting Errors</div>
<div class="ico" style="left:384px;top:46.9px"><svg class="ar" width="4" height="5" viewBox="0 0 4 5"><path d="M0 0 L3 2.25 L0 4.5 Z" fill="#1f5cb8"/></svg></div>
<div class="ico" style="left:247.9px;top:59.300000000000004px"><svg class="ic" width="8.6" height="7.4" viewBox="0 0 9 8"><path d="M0.4 1.1 Q0.4 0.4 1.1 0.4 H3.6 L4.4 1.4 H7.7 Q8.4 1.4 8.4 2.1 V7.4 H0.4 Z" fill="#e8c450" stroke="#b08838" stroke-width="0.8"/><rect x="0.9" y="2.2" width="7" height="4.8" fill="url(#fg)"/><rect x="0.9" y="2.2" width="7" height="0.7" fill="#fffff2"/><rect x="0.4" y="7" width="8" height="0.6" fill="#9c7428"/></svg></div>
<div class="it" style="left:269px;top:57.0px">Unpost Groups</div>
<div class="ico" style="left:384px;top:59.4px"><svg class="ar" width="4" height="5" viewBox="0 0 4 5"><path d="M0 0 L3 2.25 L0 4.5 Z" fill="#1f5cb8"/></svg></div>
<div class="ico" style="left:247.9px;top:71.8px"><svg class="ic" width="8.6" height="7.4" viewBox="0 0 9 8"><path d="M0.4 1.1 Q0.4 0.4 1.1 0.4 H3.6 L4.4 1.4 H7.7 Q8.4 1.4 8.4 2.1 V7.4 H0.4 Z" fill="#e8c450" stroke="#b08838" stroke-width="0.8"/><rect x="0.9" y="2.2" width="7" height="4.8" fill="url(#fg)"/><rect x="0.9" y="2.2" width="7" height="0.7" fill="#fffff2"/><rect x="0.4" y="7" width="8" height="0.6" fill="#9c7428"/></svg></div>
<div class="it" style="left:269px;top:68.89999999999999px">Posting Results-Pending Items</div>
<div class="ico" style="left:384px;top:71.89999999999999px"><svg class="ar" width="4" height="5" viewBox="0 0 4 5"><path d="M0 0 L3 2.25 L0 4.5 Z" fill="#1f5cb8"/></svg></div>
<div class="ico" style="left:247.9px;top:84.3px"><svg class="ic" width="8.6" height="7.4" viewBox="0 0 9 8"><path d="M0.4 1.1 Q0.4 0.4 1.1 0.4 H3.6 L4.4 1.4 H7.7 Q8.4 1.4 8.4 2.1 V7.4 H0.4 Z" fill="#e8c450" stroke="#b08838" stroke-width="0.8"/><rect x="0.9" y="2.2" width="7" height="4.8" fill="url(#fg)"/><rect x="0.9" y="2.2" width="7" height="0.7" fill="#fffff2"/><rect x="0.4" y="7" width="8" height="0.6" fill="#9c7428"/></svg></div>
<div class="it" style="left:269px;top:81.99999999999999px">Posting Results-Updated Items</div>
<div class="ico" style="left:384px;top:84.39999999999999px"><svg class="ar" width="4" height="5" viewBox="0 0 4 5"><path d="M0 0 L3 2.25 L0 4.5 Z" fill="#1f5cb8"/></svg></div>
<div class="ico" style="left:247.9px;top:96.8px"><svg class="ic" width="8.6" height="7.4" viewBox="0 0 9 8"><path d="M0.4 1.1 Q0.4 0.4 1.1 0.4 H3.6 L4.4 1.4 H7.7 Q8.4 1.4 8.4 2.1 V7.4 H0.4 Z" fill="#e8c450" stroke="#b08838" stroke-width="0.8"/><rect x="0.9" y="2.2" width="7" height="4.8" fill="url(#fg)"/><rect x="0.9" y="2.2" width="7" height="0.7" fill="#fffff2"/><rect x="0.4" y="7" width="8" height="0.6" fill="#9c7428"/></svg></div>
<div class="it" style="left:269px;top:93.89999999999999px">Posting Results-Direct Debits</div>
<div class="ico" style="left:384px;top:96.89999999999999px"><svg class="ar" width="4" height="5" viewBox="0 0 4 5"><path d="M0 0 L3 2.25 L0 4.5 Z" fill="#1f5cb8"/></svg></div>
<div class="ico" style="left:247.9px;top:109.3px"><svg class="ic" width="8.6" height="7.4" viewBox="0 0 9 8"><path d="M0.4 1.1 Q0.4 0.4 1.1 0.4 H3.6 L4.4 1.4 H7.7 Q8.4 1.4 8.4 2.1 V7.4 H0.4 Z" fill="#e8c450" stroke="#b08838" stroke-width="0.8"/><rect x="0.9" y="2.2" width="7" height="4.8" fill="url(#fg)"/><rect x="0.9" y="2.2" width="7" height="0.7" fill="#fffff2"/><rect x="0.4" y="7" width="8" height="0.6" fill="#9c7428"/></svg></div>
<div class="it" style="left:269px;top:106.99999999999999px">Posting Results-Drafts</div>
<div class="ico" style="left:384px;top:109.39999999999999px"><svg class="ar" width="4" height="5" viewBox="0 0 4 5"><path d="M0 0 L3 2.25 L0 4.5 Z" fill="#1f5cb8"/></svg></div>
<div class="ico" style="left:247.9px;top:121.8px"><svg class="ic" width="8.6" height="7.4" viewBox="0 0 9 8"><path d="M0.4 1.1 Q0.4 0.4 1.1 0.4 H3.6 L4.4 1.4 H7.7 Q8.4 1.4 8.4 2.1 V7.4 H0.4 Z" fill="#e8c450" stroke="#b08838" stroke-width="0.8"/><rect x="0.9" y="2.2" width="7" height="4.8" fill="url(#fg)"/><rect x="0.9" y="2.2" width="7" height="0.7" fill="#fffff2"/><rect x="0.4" y="7" width="8" height="0.6" fill="#9c7428"/></svg></div>
<div class="it" style="left:269px;top:118.89999999999999px">Posting Results-Upd Pend Items</div>
<div class="ico" style="left:384px;top:121.89999999999999px"><svg class="ar" width="4" height="5" viewBox="0 0 4 5"><path d="M0 0 L3 2.25 L0 4.5 Z" fill="#1f5cb8"/></svg></div>
<div class="ico" style="left:247.9px;top:134.29999999999998px"><svg class="ic" width="8.6" height="7.4" viewBox="0 0 9 8"><path d="M0.4 1.1 Q0.4 0.4 1.1 0.4 H3.6 L4.4 1.4 H7.7 Q8.4 1.4 8.4 2.1 V7.4 H0.4 Z" fill="#e8c450" stroke="#b08838" stroke-width="0.8"/><rect x="0.9" y="2.2" width="7" height="4.8" fill="url(#fg)"/><rect x="0.9" y="2.2" width="7" height="0.7" fill="#fffff2"/><rect x="0.4" y="7" width="8" height="0.6" fill="#9c7428"/></svg></div>
<div class="it" style="left:269px;top:132.0px">Posting Results-Payments</div>
<div class="ico" style="left:384px;top:134.4px"><svg class="ar" width="4" height="5" viewBox="0 0 4 5"><path d="M0 0 L3 2.25 L0 4.5 Z" fill="#1f5cb8"/></svg></div>
<div class="ico" style="left:247.9px;top:146.79999999999998px"><svg class="ic" width="8.6" height="7.4" viewBox="0 0 9 8"><path d="M0.4 1.1 Q0.4 0.4 1.1 0.4 H3.6 L4.4 1.4 H7.7 Q8.4 1.4 8.4 2.1 V7.4 H0.4 Z" fill="#e8c450" stroke="#b08838" stroke-width="0.8"/><rect x="0.9" y="2.2" width="7" height="4.8" fill="url(#fg)"/><rect x="0.9" y="2.2" width="7" height="0.7" fill="#fffff2"/><rect x="0.4" y="7" width="8" height="0.6" fill="#9c7428"/></svg></div>
<div class="it" style="left:269px;top:143.9px">Revenue Estimates</div>
<div class="ico" style="left:384px;top:146.9px"><svg class="ar" width="4" height="5" viewBox="0 0 4 5"><path d="M0 0 L3 2.25 L0 4.5 Z" fill="#1f5cb8"/></svg></div>
<div class="ico" style="left:247.9px;top:159.29999999999998px"><svg class="ic" width="8.6" height="7.4" viewBox="0 0 9 8"><path d="M0.4 1.1 Q0.4 0.4 1.1 0.4 H3.6 L4.4 1.4 H7.7 Q8.4 1.4 8.4 2.1 V7.4 H0.4 Z" fill="#e8c450" stroke="#b08838" stroke-width="0.8"/><rect x="0.9" y="2.2" width="7" height="4.8" fill="url(#fg)"/><rect x="0.9" y="2.2" width="7" height="0.7" fill="#fffff2"/><rect x="0.4" y="7" width="8" height="0.6" fill="#9c7428"/></svg></div>
<div class="it" style="left:269px;top:157.0px">Revaluation</div>
<div class="ico" style="left:384px;top:159.4px"><svg class="ar" width="4" height="5" viewBox="0 0 4 5"><path d="M0 0 L3 2.25 L0 4.5 Z" fill="#1f5cb8"/></svg></div>
<div class="ico" style="left:247.9px;top:171.79999999999998px"><svg class="ic" width="8.6" height="7.4" viewBox="0 0 9 8"><path d="M0.4 1.1 Q0.4 0.4 1.1 0.4 H3.6 L4.4 1.4 H7.7 Q8.4 1.4 8.4 2.1 V7.4 H0.4 Z" fill="#e8c450" stroke="#b08838" stroke-width="0.8"/><rect x="0.9" y="2.2" width="7" height="4.8" fill="url(#fg)"/><rect x="0.9" y="2.2" width="7" height="0.7" fill="#fffff2"/><rect x="0.4" y="7" width="8" height="0.6" fill="#9c7428"/></svg></div>
<div class="it" style="left:269px;top:168.9px">Archive Receivables</div>
<div class="ico" style="left:384px;top:171.9px"><svg class="ar" width="4" height="5" viewBox="0 0 4 5"><path d="M0 0 L3 2.25 L0 4.5 Z" fill="#1f5cb8"/></svg></div>
<div class="ico" style="left:247.8px;top:183.7px"><svg class="ic" width="8.5" height="10" viewBox="0 0 9 10" preserveAspectRatio="none"><path d="M0.5 0.5 H6.2 L8.3 2.6 V9.5 H0.5 Z" fill="#f6f9fe" stroke="#6e9ade" stroke-width="0.9"/><rect x="1.8" y="2.1" width="5.3" height="6.6" fill="url(#dg)"/><path d="M6 0.7 L8.1 2.8 H6 Z" fill="#4a7ad0"/></svg></div>
<div class="it" style="left:269px;top:182.0px">Request Receivables Update</div>
<div class="ico" style="left:247.8px;top:196.2px"><svg class="ic" width="8.5" height="10" viewBox="0 0 9 10" preserveAspectRatio="none"><path d="M0.5 0.5 H6.2 L8.3 2.6 V9.5 H0.5 Z" fill="#f6f9fe" stroke="#6e9ade" stroke-width="0.9"/><rect x="1.8" y="2.1" width="5.3" height="6.6" fill="url(#dg)"/><path d="M6 0.7 L8.1 2.8 H6 Z" fill="#4a7ad0"/></svg></div>
<div class="it" style="left:269px;top:193.9px">Out of Balance Customers</div>
<div class="ico" style="left:247.8px;top:208.7px"><svg class="ic" width="8.5" height="10" viewBox="0 0 9 10" preserveAspectRatio="none"><path d="M0.5 0.5 H6.2 L8.3 2.6 V9.5 H0.5 Z" fill="#f6f9fe" stroke="#6e9ade" stroke-width="0.9"/><rect x="1.8" y="2.1" width="5.3" height="6.6" fill="url(#dg)"/><path d="M6 0.7 L8.1 2.8 H6 Z" fill="#4a7ad0"/></svg></div>
<div class="it" style="left:269px;top:207.0px">Request Entry Event Processor</div>
<div class="ico" style="left:247.8px;top:221.2px"><svg class="ic" width="8.5" height="10" viewBox="0 0 9 10" preserveAspectRatio="none"><path d="M0.5 0.5 H6.2 L8.3 2.6 V9.5 H0.5 Z" fill="#f6f9fe" stroke="#6e9ade" stroke-width="0.9"/><rect x="1.8" y="2.1" width="5.3" height="6.6" fill="url(#dg)"/><path d="M6 0.7 L8.1 2.8 H6 Z" fill="#4a7ad0"/></svg></div>
<div class="it" style="left:269px;top:218.9px">Request Application Engine</div>
<div class="ico" style="left:247.8px;top:233.7px"><svg class="ic" width="8.5" height="10" viewBox="0 0 9 10" preserveAspectRatio="none"><path d="M0.5 0.5 H6.2 L8.3 2.6 V9.5 H0.5 Z" fill="#f6f9fe" stroke="#6e9ade" stroke-width="0.9"/><rect x="1.8" y="2.1" width="5.3" height="6.6" fill="url(#dg)"/><path d="M6 0.7 L8.1 2.8 H6 Z" fill="#4a7ad0"/></svg></div>
<div class="it" style="left:269px;top:232.0px">Reset Process</div>
<div class="ico" style="left:247.8px;top:246.2px"><svg class="ic" width="8.5" height="10" viewBox="0 0 9 10" preserveAspectRatio="none"><path d="M0.5 0.5 H6.2 L8.3 2.6 V9.5 H0.5 Z" fill="#f6f9fe" stroke="#6e9ade" stroke-width="0.9"/><rect x="1.8" y="2.1" width="5.3" height="6.6" fill="url(#dg)"/><path d="M6 0.7 L8.1 2.8 H6 Z" fill="#4a7ad0"/></svg></div>
<div class="it" style="left:269px;top:243.9px">Job Message Log Summary</div>
<div class="ico" style="left:247.8px;top:258.70000000000005px"><svg class="ic" width="8.5" height="10" viewBox="0 0 9 10" preserveAspectRatio="none"><path d="M0.5 0.5 H6.2 L8.3 2.6 V9.5 H0.5 Z" fill="#f6f9fe" stroke="#6e9ade" stroke-width="0.9"/><rect x="1.8" y="2.1" width="5.3" height="6.6" fill="url(#dg)"/><path d="M6 0.7 L8.1 2.8 H6 Z" fill="#4a7ad0"/></svg></div>
<div class="it" style="left:269px;top:257.00000000000006px">Update Pagelet Statistics</div>
<div class="ico" style="left:247.8px;top:271.20000000000005px"><svg class="ic" width="8.5" height="10" viewBox="0 0 9 10" preserveAspectRatio="none"><path d="M0.5 0.5 H6.2 L8.3 2.6 V9.5 H0.5 Z" fill="#f6f9fe" stroke="#6e9ade" stroke-width="0.9"/><rect x="1.8" y="2.1" width="5.3" height="6.6" fill="url(#dg)"/><path d="M6 0.7 L8.1 2.8 H6 Z" fill="#4a7ad0"/></svg></div>
<div class="it" style="left:269px;top:268.90000000000003px">Request Rebate Process</div>
</div></div>
<div class="abs" style="left:630px;top:0;width:10px;height:480px;background-color:#ecebe5;background-image:linear-gradient(45deg,#dfdfe1 25%,transparent 25%,transparent 75%,#dfdfe1 75%),linear-gradient(45deg,#dfdfe1 25%,transparent 25%,transparent 75%,#dfdfe1 75%);background-size:5px 5px;background-position:0 0,2.5px 2.5px"></div>
<div class="abs" style="left:630px;top:0;width:10px;height:10px;background:#dcd8d0;border-right:1px solid #76726c;border-bottom:1px solid #76726c;box-shadow:inset 1px 1px 0 #f6f4f0,inset -1px -1px 0 #b0aca4"></div>
<svg class="abs" style="left:632px;top:2.6px" width="6" height="4"><path d="M0 3 L2.75 0.2 L5.5 3 Z" fill="#4a4a4a"/></svg>
<div class="abs" style="left:630px;top:470px;width:10px;height:10px;background:#dcd8d0;border-right:1px solid #76726c;border-bottom:1px solid #76726c;box-shadow:inset 1px 1px 0 #f6f4f0,inset -1px -1px 0 #b0aca4"></div>
<svg class="abs" style="left:632px;top:473.8px" width="6" height="4"><path d="M0 0.2 L5.5 0.2 L2.75 3 Z" fill="#4a4a4a"/></svg>
</body></html>
